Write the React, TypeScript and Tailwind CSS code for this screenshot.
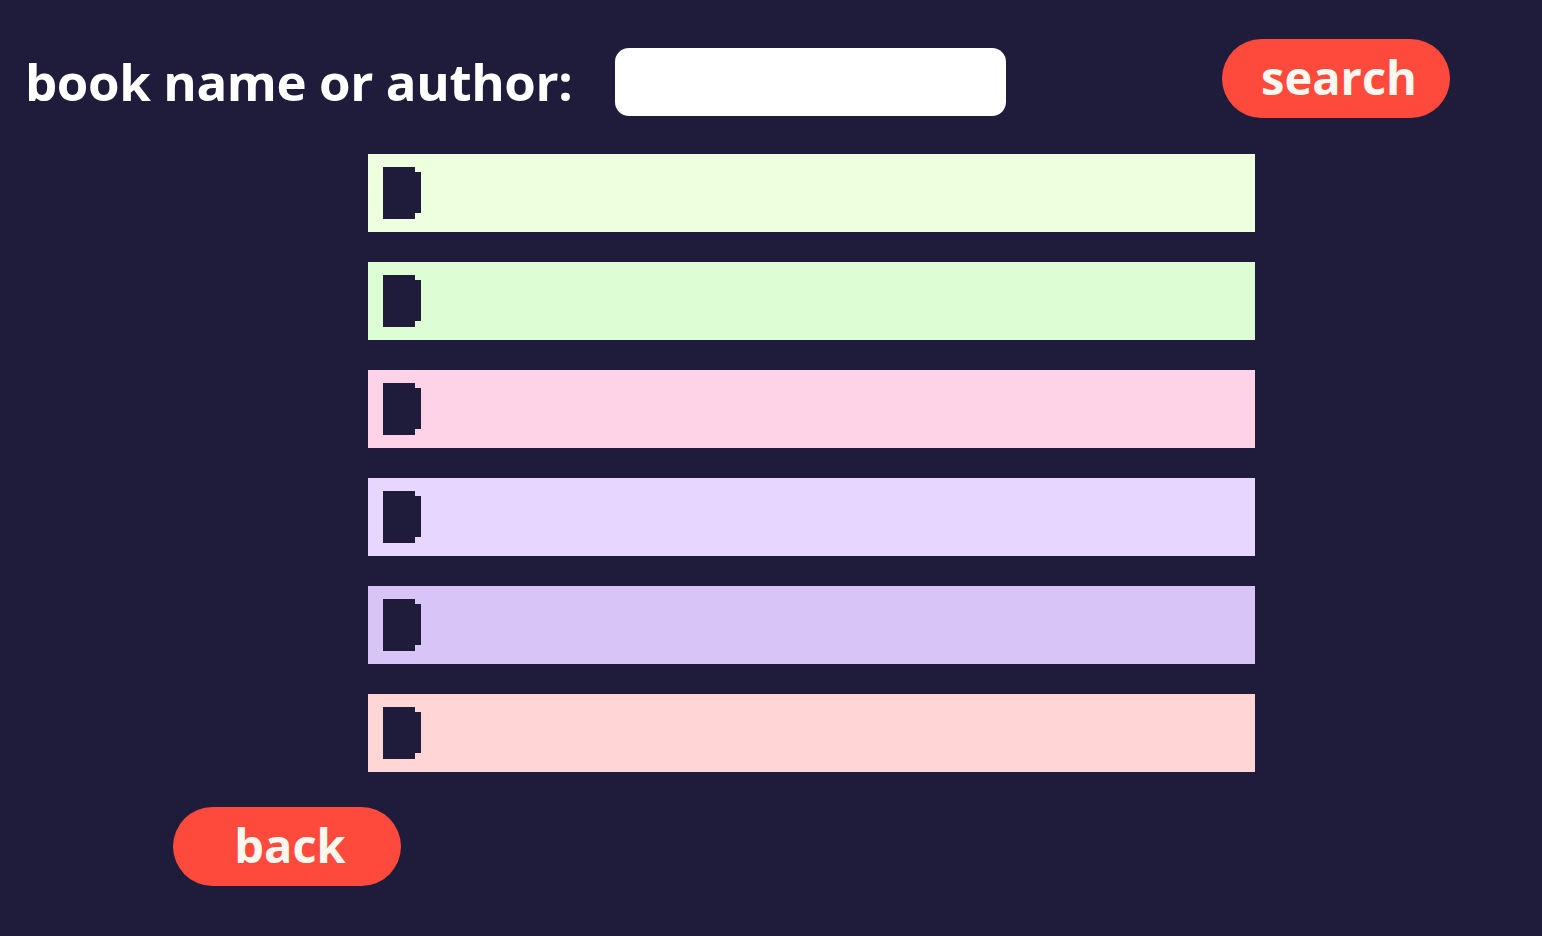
import React from "react";

const rows = ["bg-[#eeffe0]", "bg-[#ddfdd5]", "bg-[#fed3e7]", "bg-[#e7d6ff]", "bg-[#d8c4f6]", "bg-[#ffd6d5]"];

function Bookmark() {
  return (
    <svg width="38" height="52" viewBox="0 0 38 52" className="block">
      <path d="M0 0H32V5H38V46H32V52H0Z" fill="#1e1c3a" />
    </svg>
  );
}

export default function App() {
  return (
    <div className="w-full h-[936px] bg-[#1e1c3a] overflow-hidden" style={{ fontFamily: '"Open Sans", "Liberation Sans", sans-serif' }}>
      <div className="flex items-center pt-[39px] pl-[25px]">
        <div className="w-[548px] mt-[6px] text-white font-bold text-[51px] leading-none tracking-[-0.4px] whitespace-nowrap">book name or author:</div>
        <input className="ml-[42px] mt-[6px] w-[391px] h-[68px] bg-white rounded-[14px] outline-none" />
        <button className="ml-[216px] w-[228px] h-[79px] rounded-full bg-[#fd4a3d] text-[#fff8f0] font-bold text-[47px] leading-none pb-[2px] pl-[6px]">search</button>
      </div>
      <div className="mt-[36px] ml-[368px] flex flex-col gap-[30px]">
        {rows.map((c, i) => (
          <div key={i} className={`w-[887px] h-[78px] ${c} pl-[15px] pt-[13px]`}>
            <Bookmark />
          </div>
        ))}
      </div>
      <button className="mt-[35px] ml-[173px] w-[228px] h-[79px] rounded-full bg-[#fd4a3d] text-[#fff8f0] font-bold text-[47px] leading-none pb-[2px] pl-[6px]">back</button>
    </div>
  );
}
